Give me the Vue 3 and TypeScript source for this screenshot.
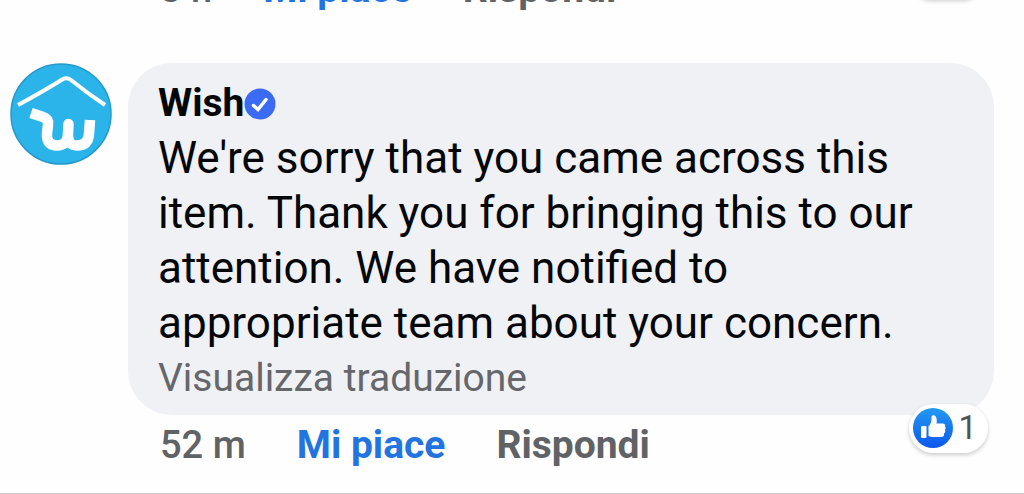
<script setup lang="ts">
import { ref } from 'vue'

const liked = ref(false)
const author = 'Wish'
const message =
  "We're sorry that you came across this item. Thank you for bringing this to our attention. We have notified to appropriate team about your concern."
const reactions = 1
</script>

<template>
  <main class="thread">
    <div class="previous">
      <div class="actions">
        <span class="time">3 h</span>
        <button type="button" class="action like">Mi piace</button>
        <button type="button" class="action">Rispondi</button>
      </div>
      <div class="previous-pill"></div>
    </div>

    <article class="comment">
      <a class="avatar" href="#" :aria-label="author">
        <svg viewBox="0 0 102 102" aria-hidden="true">
          <circle cx="51" cy="51" r="50" fill="#2bb4ea" stroke="#2599c9" stroke-width="1.5" />
          <path d="M8 42 Q34 28 53 16 Q57 14 61 17 Q77 30 95 42" fill="none" stroke="#fff" stroke-width="4" />
          <path
            d="M21 50 L33 54 Q39 56 38 62 L37 70 Q36 82.500 47 82.500 Q57.500 82.500 58 71 L58.500 61 L58 71 Q57.500 82.500 67 82.500 Q78 82.500 79 71 L80 57"
            fill="none"
            stroke="#fff"
            stroke-width="10.5"
            stroke-linejoin="round"
          />
        </svg>
      </a>
      <div class="body">
        <div class="bubble">
          <div class="name">
            <a href="#">{{ author }}</a>
            <svg class="verified" viewBox="0 0 32 32" aria-hidden="true">
              <circle cx="16" cy="16" r="15.5" fill="#3c6bf3" />
              <path d="M9.5 17.500 L14 21.500 L22 11.500" fill="none" stroke="#fff" stroke-width="3.5" stroke-linecap="round" />
            </svg>
          </div>
          <p class="message">{{ message }}</p>
          <button type="button" class="translate">Visualizza traduzione</button>
        </div>
        <div class="actions">
          <span class="time">52 m</span>
          <button type="button" class="action like" :aria-pressed="liked" @click="liked = !liked">Mi piace</button>
          <button type="button" class="action">Rispondi</button>
        </div>
        <button type="button" class="reactions">
          <svg viewBox="0 0 40 40" aria-hidden="true">
            <defs>
              <linearGradient id="thumb" x1="0" y1="0" x2="0" y2="1">
                <stop offset="0" stop-color="#239af0" />
                <stop offset="1" stop-color="#0c57ef" />
              </linearGradient>
            </defs>
            <circle cx="20" cy="20" r="20" fill="url(#thumb)" />
            <rect x="8" y="18" width="5.5" height="12" rx="1.2" fill="#fff" />
            <path
              d="M15.5 28 V18 Q18.500 15.500 18.500 11 V8.500 Q19.500 6.500 21.500 7.500 Q24.500 9 23.500 15.500 H30 Q33 16 32 18.500 Q33.500 20 32 22 Q33 24 31 25.500 Q31.500 29 28 29 H20 Q17.500 29 15.500 28 Z"
              fill="#fff"
            />
          </svg>
          <span>{{ reactions }}</span>
        </button>
      </div>
    </article>
  </main>
</template>

<style>
body {
  margin: 0;
  background: #fefefe;
}
</style>

<style scoped>
.thread {
  overflow: hidden;
  border-bottom: 1px solid #c9cbcf;
  font-family: Roboto, "Liberation Sans", sans-serif;
  color: #050608;
}

button {
  margin: 0;
  padding: 0;
  border: 0;
  background: none;
  font: inherit;
  color: inherit;
  cursor: pointer;
}

a {
  color: inherit;
  text-decoration: none;
}

.previous {
  position: relative;
  margin-top: -41px;
  padding: 0 30px 46px 128px;
}

.previous-pill {
  position: absolute;
  right: 38px;
  top: -9px;
  width: 78px;
  height: 49px;
  border-radius: 25px;
  box-shadow: 0 2px 4px rgba(0, 0, 0, 0.2);
}

.comment {
  display: flex;
  align-items: flex-start;
  gap: 16px;
  padding: 0 30px 20px 10px;
}

.avatar {
  flex: none;
  width: 102px;
  height: 102px;
}

.avatar svg {
  display: block;
}

.body {
  position: relative;
  flex: 1;
  min-width: 0;
}

.bubble {
  padding: 13px 44px 9px 30px;
  border-radius: 44px;
  background: #eff1f5;
  line-height: 55px;
}

.name {
  display: flex;
  align-items: center;
  font-size: 39px;
  font-weight: 700;
}

.verified {
  width: 32px;
  height: 32px;
}

.message {
  margin: 0;
  font-size: 44px;
}

.translate {
  display: block;
  font-size: 39px;
  color: #65676b;
}

.actions {
  display: flex;
  align-items: baseline;
  gap: 51px;
  padding: 3px 32px 0;
  font-size: 39px;
  line-height: 55px;
  color: #606265;
}

.time {
  font-size: 38px;
  font-weight: 500;
}

.action {
  font-weight: 700;
}

.like {
  color: #2374e1;
}

.reactions {
  position: absolute;
  right: 6px;
  bottom: 20px;
  display: flex;
  align-items: center;
  gap: 5px;
  padding: 4px 11px 5px 4px;
  border-radius: 25px;
  background: #fff;
  box-shadow: 0 2px 4px rgba(0, 0, 0, 0.2);
  font-size: 33px;
  line-height: 40px;
  color: #505255;
}

.reactions svg {
  width: 40px;
  height: 40px;
}
</style>
